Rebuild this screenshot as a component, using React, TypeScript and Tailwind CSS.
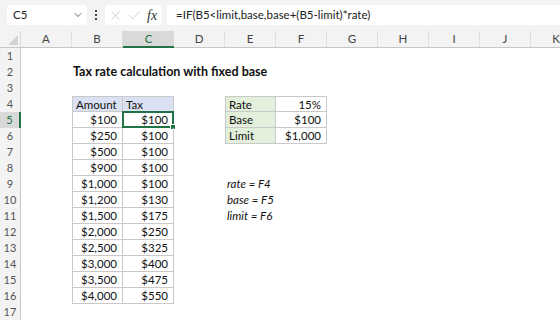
import React from "react";
import { ChevronDown, X, Check } from "lucide-react";

const columns = ["A", "B", "C", "D", "E", "F", "G", "H", "I", "J", "K"];

const amounts: [string, string][] = [
  ["$100", "$100"],
  ["$250", "$100"],
  ["$500", "$100"],
  ["$900", "$100"],
  ["$1,000", "$100"],
  ["$1,200", "$130"],
  ["$1,500", "$175"],
  ["$2,000", "$250"],
  ["$2,500", "$325"],
  ["$3,000", "$400"],
  ["$3,500", "$475"],
  ["$4,000", "$550"],
];

const inputs: [string, string][] = [
  ["Rate", "15%"],
  ["Base", "$100"],
  ["Limit", "$1,000"],
];

const notes: Record<number, string> = { 9: "rate = F4", 10: "base = F5", 11: "limit = F6" };

const Cell: React.FC<{ row: number; col: string }> = ({ row, col }) => {
  const base = "relative w-[51px] h-[16px] shrink-0 text-[11.5px] leading-[15px] text-[#111]";

  // B4:C16 table
  if ((col === "B" || col === "C") && row >= 4 && row <= 16) {
    const edges = `border-r border-b border-[#c9c9c9] ${col === "B" ? "border-l" : ""} ${row === 4 ? "border-t" : ""}`;
    if (row === 4) {
      return (
        <div className={`${base} ${edges} bg-[#d9e1f2] px-[3px]`}>
          {col === "B" ? "Amount" : "Tax"}
        </div>
      );
    }
    const [amt, tax] = amounts[row - 5];
    return (
      <div className={`${base} ${edges} text-right pr-[5px]`}>
        {col === "B" ? amt : tax}
        {col === "C" && row === 5 && (
          <div className="absolute -left-[1px] -top-[1px] w-[52px] h-[17px] border-2 border-[#217346]">
            <div className="absolute -right-[4px] -bottom-[4px] w-[6px] h-[6px] bg-[#217346] border border-white" />
          </div>
        )}
      </div>
    );
  }

  // E4:F6 inputs
  if ((col === "E" || col === "F") && row >= 4 && row <= 6) {
    const [label, value] = inputs[row - 4];
    const edges = `border-r border-b border-[#c9c9c9] ${col === "E" ? "border-l" : ""} ${row === 4 ? "border-t" : ""}`;
    return col === "E" ? (
      <div className={`${base} ${edges} bg-[#e2efda] px-[3px]`}>{label}</div>
    ) : (
      <div className={`${base} ${edges} text-right pr-[5px]`}>{value}</div>
    );
  }

  if (col === "B" && row === 2) {
    return (
      <div className={`${base} whitespace-nowrap font-bold text-[12.5px] pl-[1px]`}>
        Tax rate calculation with fixed base
      </div>
    );
  }

  if (col === "E" && notes[row]) {
    return <div className={`${base} whitespace-nowrap italic pl-[2px]`}>{notes[row]}</div>;
  }

  return <div className={base} />;
};

const App: React.FC = () => {
  const rows = Array.from({ length: 17 }, (_, i) => i + 1);

  return (
    <div
      className="w-[560px] h-[320px] overflow-hidden bg-white"
      style={{ fontFamily: "Lato, 'Open Sans', sans-serif" }}
    >
      {/* formula bar */}
      <div className="h-[31px] bg-[#f3f3f3] flex items-center gap-[5px] pl-[7px] pb-[1px]">
        <div className="w-[80px] h-[20px] bg-white rounded-[3px] flex items-center justify-between pl-[6px] pr-[3px] text-[11.5px] text-[#222]">
          <span>C5</span>
          <ChevronDown size={12} strokeWidth={1.6} className="text-[#444]" />
        </div>
        <div className="w-[8px] flex flex-col items-center gap-[2px]">
          <span className="w-[2px] h-[2px] bg-[#444]" />
          <span className="w-[2px] h-[2px] bg-[#444]" />
          <span className="w-[2px] h-[2px] bg-[#444]" />
        </div>
        <div className="w-[57px] h-[20px] bg-white rounded-[3px] flex items-center pl-[3px] gap-[4px]">
          <X size={15} strokeWidth={1} className="text-[#b0b0b0]" />
          <Check size={15} strokeWidth={1} className="text-[#b0b0b0]" />
          <span
            className="text-[14px] italic text-[#333] ml-[1px]"
            style={{ fontFamily: "'Liberation Serif', serif" }}
          >
            fx
          </span>
        </div>
        <div className="flex-1 h-[20px] bg-white flex items-center pl-[9px] text-[11.5px] text-[#222]">
          =IF(B5&lt;limit,base,base+(B5-limit)*rate)
        </div>
      </div>

      {/* column headers */}
      <div className="flex h-[17px] bg-[#f3f3f3] border-b border-[#c6c6c6] text-[11.5px] leading-[16px] text-[#444]">
        <div className="w-[21px] shrink-0 border-r border-[#d8d8d8] flex items-end justify-end p-[2px]">
          <svg width="10" height="10" viewBox="0 0 10 10">
            <polygon points="10,0 10,10 0,10" fill="#d3d3d3" />
          </svg>
        </div>
        {columns.map((c) =>
          c === "C" ? (
            <div
              key={c}
              className="w-[51px] shrink-0 text-center bg-[#d9d9d9] text-[#217346] border-b-2 border-[#217346] -mb-[1px]"
            >
              {c}
            </div>
          ) : (
            <div key={c} className="w-[51px] shrink-0 text-center border-r border-[#dedede]">
              {c}
            </div>
          )
        )}
      </div>

      {/* sheet */}
      {rows.map((r) => (
        <div key={r} className="flex">
          <div
            className={`w-[21px] h-[16px] shrink-0 text-center text-[11px] leading-[16px] border-r ${
              r === 5
                ? "bg-[#d9d9d9] text-[#217346] border-r-2 border-[#217346]"
                : "bg-[#f3f3f3] text-[#555] border-[#c6c6c6]"
            }`}
          >
            {r}
          </div>
          {columns.map((c) => (
            <Cell key={c} row={r} col={c} />
          ))}
        </div>
      ))}
    </div>
  );
};

export default App;
